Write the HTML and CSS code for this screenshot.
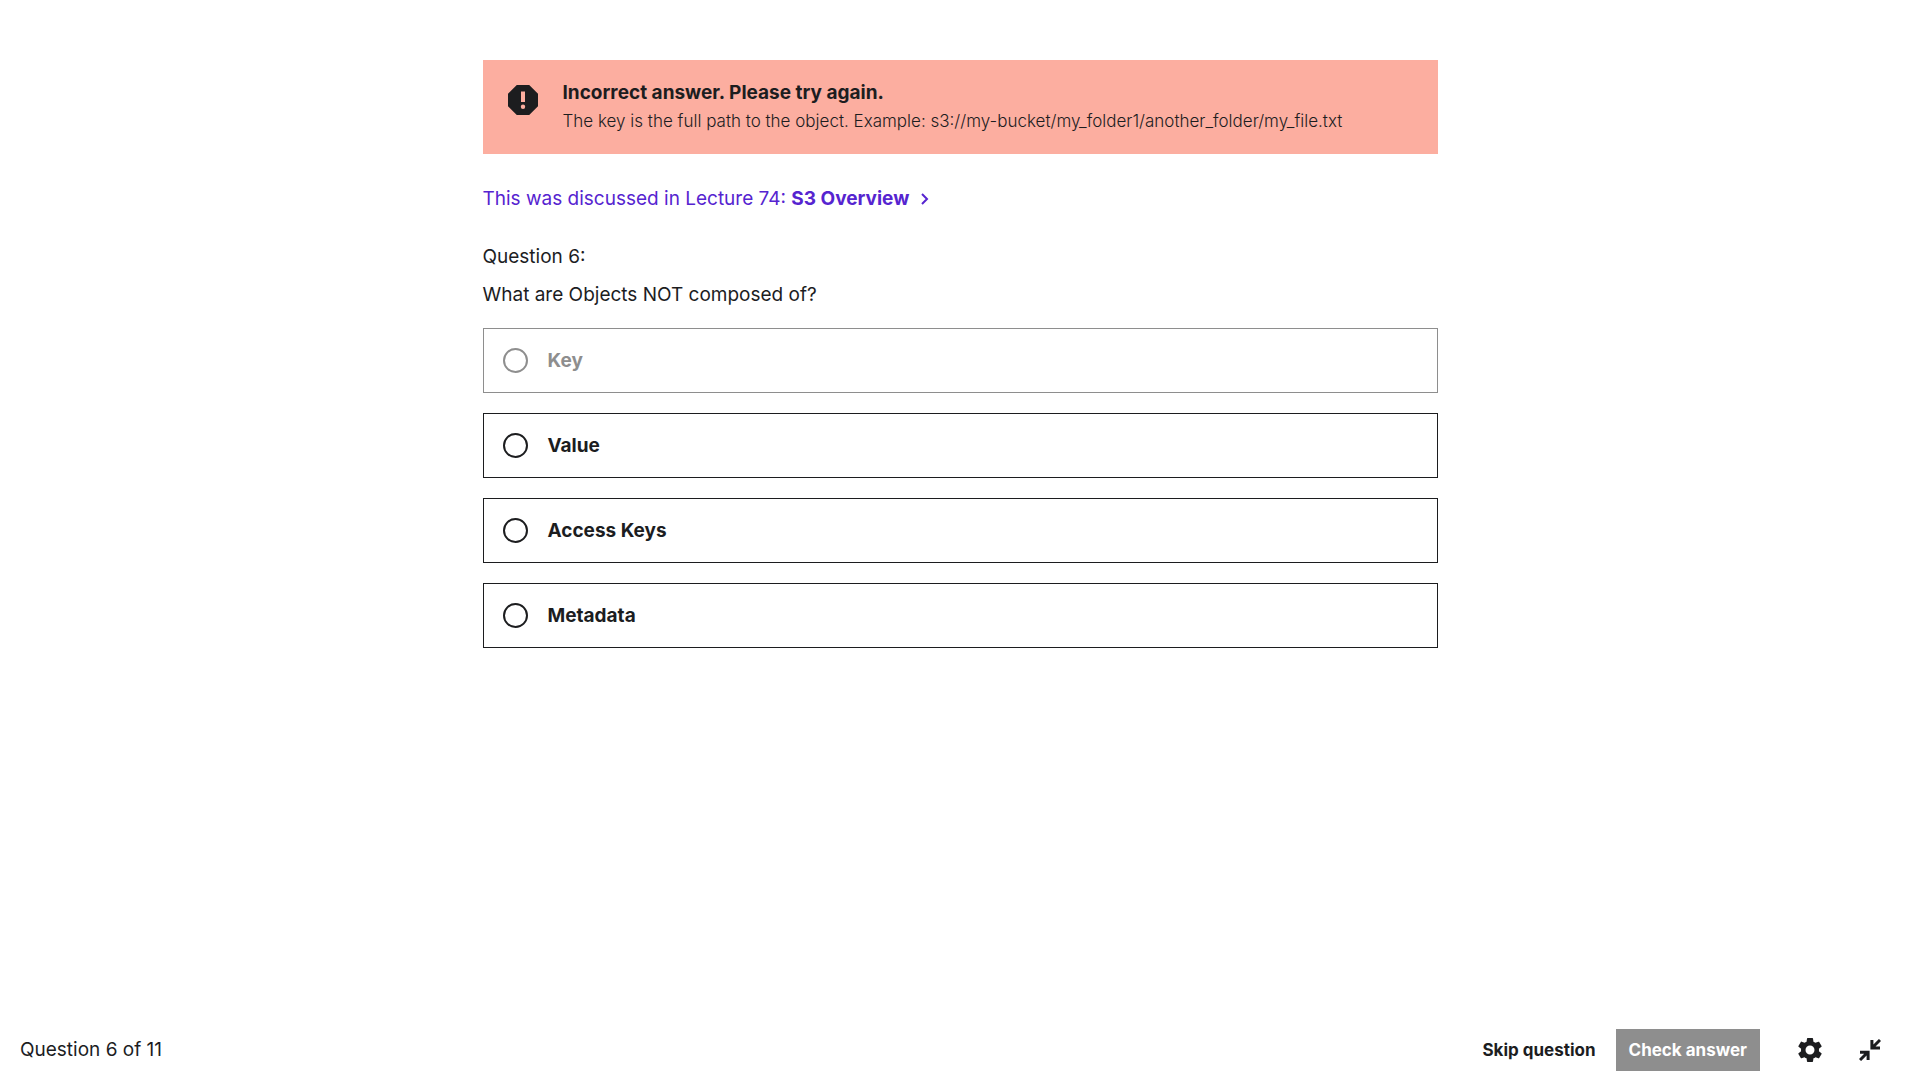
FILE: index.html
```
<!DOCTYPE html>
<html lang="en">
<head>
  <meta charset="utf-8">
  <meta name="viewport" content="width=device-width, initial-scale=1">
  <title>Quiz: Question 6 of 11</title>
  <link rel="stylesheet" href="styles.css">
</head>
<body>
  <form class="quiz">
    <main class="quiz-body">
      <section class="alert" role="alert">
        <svg class="alert-icon" viewBox="0 0 30 30" aria-hidden="true">
          <path fill-rule="evenodd" d="M8.800 0h12.400L30 8.800v12.400L21.200 30H8.800L0 21.200V8.800zM13 6.500h4v10.500h-4zM15 19.500a2.200 2.200 0 1 0 0 4.400 2.200 2.200 0 1 0 0-4.400z"/>
        </svg>
        <div class="alert-text">
          <h2 class="alert-title">Incorrect answer. Please try again.</h2>
          <p class="alert-message">The key is the full path to the object. Example: s3://my-bucket/my_folder1/another_folder/my_file.txt</p>
        </div>
      </section>

      <a class="lecture-link" href="#lecture-74">
        <span>This was discussed in Lecture 74: <strong>S3 Overview</strong></span>
        <svg class="chevron" viewBox="0 0 8 12" aria-hidden="true"><path d="M1 1l5 5-5 5"/></svg>
      </a>

      <fieldset class="question">
        <legend class="question-heading">
          <span class="question-number">Question 6:</span>
          <span class="question-prompt">What are Objects NOT composed of?</span>
        </legend>
        <div class="options">
          <label class="option option-disabled"><input class="option-radio" type="radio" name="answer" value="key" disabled><span>Key</span></label>
          <label class="option"><input class="option-radio" type="radio" name="answer" value="value"><span>Value</span></label>
          <label class="option"><input class="option-radio" type="radio" name="answer" value="access-keys"><span>Access Keys</span></label>
          <label class="option"><input class="option-radio" type="radio" name="answer" value="metadata"><span>Metadata</span></label>
        </div>
      </fieldset>
    </main>

    <footer class="footer">
      <span class="progress">Question 6 of 11</span>
      <div class="actions">
        <button class="skip-button" type="button">Skip question</button>
        <button class="check-button" type="submit" disabled>Check answer</button>
        <div class="tools">
          <button class="icon-button" type="button" aria-label="Settings">
            <svg class="gear-icon" viewBox="0 0 24 24" aria-hidden="true"><path d="M19.140 12.940c.040-.300.060-.610.060-.940s-.020-.640-.070-.940l2.030-1.580c.180-.140.230-.410.120-.610l-1.920-3.320c-.120-.220-.370-.290-.590-.220l-2.390.960c-.500-.380-1.030-.700-1.620-.940l-.360-2.540c-.040-.240-.240-.410-.480-.410h-3.840c-.240 0-.430.170-.470.410l-.360 2.540c-.590.240-1.130.570-1.620.940l-2.390-.960c-.220-.080-.470 0-.590.220L2.740 8.870c-.120.210-.080.470.120.610l2.030 1.580c-.050.300-.090.630-.090.940s.020.640.070.940l-2.030 1.580c-.180.140-.230.410-.120.610l1.920 3.320c.120.220.370.290.590.220l2.390-.960c.500.380 1.030.700 1.620.940l.360 2.540c.050.240.240.410.480.410h3.840c.240 0 .440-.170.470-.410l.360-2.540c.590-.240 1.130-.560 1.620-.940l2.390.960c.220.080.470 0 .590-.220l1.920-3.320c.120-.220.070-.470-.120-.610zM12 15.600a3.600 3.600 0 1 1 0-7.200 3.600 3.600 0 0 1 0 7.200z"/></svg>
          </button>
          <button class="icon-button" type="button" aria-label="Exit expanded view">
            <svg class="collapse-icon" viewBox="0 0 22 22" aria-hidden="true"><path d="M1 21l7.500-7.500M1 13.200h8.100V21M21 1l-7.500 7.500M12.900 1v7.900H21"/></svg>
          </button>
        </div>
      </div>
    </footer>
  </form>
</body>
</html>
```
FILE: styles.css
```
* {
  box-sizing: border-box;
}

body {
  margin: 0;
  background: #fff;
  color: #1c1d1f;
  font: 400 19px/28px Inter, "Liberation Sans", sans-serif;
}

button {
  font: inherit;
  color: inherit;
  background: none;
  border: 0;
  padding: 0;
  cursor: pointer;
}

.quiz {
  display: flex;
  flex-direction: column;
  min-height: 100vh;
}

.quiz-body {
  flex: 1;
  width: 100%;
  max-width: 955px;
  margin: 0 auto;
  padding: 60px 0;
}

/* Feedback banner */
.alert {
  display: flex;
  gap: 25px;
  padding: 19px 25px;
  background: #fcaea0;
}

.alert-icon {
  flex: none;
  width: 30px;
  height: 30px;
  margin-top: 6px;
  fill: #1c1d1f;
}

.alert-title,
.alert-message {
  margin: 0;
}

.alert-title {
  font-size: 19px;
  font-weight: 700;
}

.alert-message {
  font-size: 17px;
  font-weight: 300;
}

.lecture-link {
  display: flex;
  align-items: center;
  gap: 12px;
  margin-top: 31px;
  color: #5624d0;
  text-decoration: none;
}

.chevron {
  width: 8px;
  height: 12px;
  fill: none;
  stroke: currentColor;
  stroke-width: 2;
}

/* Question and answers */
.question {
  min-width: 0;
  margin: 30px 0 0;
  padding: 0;
  border: 0;
}

.question-heading {
  display: flex;
  flex-direction: column;
  gap: 10px;
  padding: 0;
}

.options {
  display: flex;
  flex-direction: column;
  gap: 20px;
  margin-top: 19px;
}

.option {
  display: flex;
  align-items: center;
  gap: 20px;
  min-height: 65px;
  padding: 0 19px;
  border: 1px solid #1c1d1f;
  font-weight: 700;
}

.option-radio {
  appearance: none;
  flex: none;
  width: 25px;
  height: 25px;
  margin: 0;
  color: inherit;
  border: 2px solid currentColor;
  border-radius: 50%;
}

.option-radio:checked {
  background: radial-gradient(currentColor 6px, transparent 7px);
}

.option-disabled {
  color: #8e8e8e;
  border-color: #8e8e8e;
}

/* Bottom bar */
.footer {
  display: flex;
  align-items: center;
  justify-content: space-between;
  min-height: 60px;
  padding: 0 20px;
}

.progress {
  line-height: 30px;
}

.actions {
  display: flex;
  align-items: center;
  gap: 20px;
}

.skip-button,
.check-button {
  height: 42px;
  font-size: 17px;
  font-weight: 700;
}

.check-button {
  padding: 0 13px;
  background: #8e8e8e;
  color: #fff;
  cursor: default;
}

.tools {
  display: flex;
}

.icon-button {
  display: flex;
  align-items: center;
  justify-content: center;
  width: 60px;
  height: 42px;
}

.gear-icon {
  width: 30px;
  height: 30px;
  fill: currentColor;
}

.collapse-icon {
  width: 22px;
  height: 22px;
  fill: none;
  stroke: currentColor;
  stroke-width: 3;
}
```
